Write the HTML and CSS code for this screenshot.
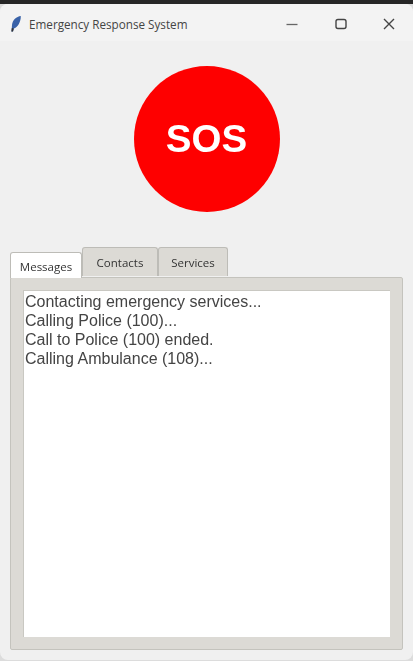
FILE: index.html
```html
<!DOCTYPE html>
<html>
<head>
<title>Emergency Response System</title>
<link rel="stylesheet" href="styles.css">
</head>
<body>

  <div class="top-strip"></div>

  <div class="window">
    <div class="titlebar">
      <svg class="feather" width="12" height="18" viewBox="0 0 12 18">
        <path d="M10.8 1 C6.5 1.5 2.5 5 2 10 L1.8 13 L1.4 16.5 L3 16.5 L3.8 13.5 C7.5 12.5 11 7 10.8 1 Z" fill="#3a62a8"/>
        <path d="M1.8 13 L1.4 16.5 L3 16.5 L3.8 13.5 Z" fill="#333"/>
      </svg>
      <span class="title">Emergency Response System</span>
      <div class="controls">
        <svg width="14" height="14" viewBox="0 0 14 14"><path d="M1.5 7.5 H12.5" stroke="#666" stroke-width="1.3"/></svg>
        <svg width="14" height="14" viewBox="0 0 14 14"><rect x="2" y="2.5" width="10" height="9" rx="2" fill="none" stroke="#444" stroke-width="1.4"/></svg>
        <svg width="14" height="14" viewBox="0 0 14 14"><path d="M2 2 L12 12 M12 2 L2 12" stroke="#444" stroke-width="1.4"/></svg>
      </div>
    </div>

    <div class="content">
      <div class="sos-row">
        <button class="sos">SOS</button>
      </div>

      <div class="tabs">
        <div class="tab active">Messages</div>
        <div class="tab">Contacts</div>
        <div class="tab">Services</div>
      </div>

      <div class="tab-panel">
        <div class="log">
          <p>Contacting emergency services...</p>
          <p>Calling Police (100)...</p>
          <p>Call to Police (100) ended.</p>
          <p>Calling Ambulance (108)...</p>
        </div>
      </div>
    </div>
  </div>

</body>
</html>
```

FILE: styles.css
```css
html, body {
  margin: 0;
  padding: 0;
}

body {
  width: 413px;
  height: 661px;
  overflow: hidden;
  background: #dcdcdc;
  font-family: "Liberation Sans", Arial, sans-serif;
  color: #333;
}

.top-strip {
  height: 4px;
  background: #262626;
}

.window {
  height: 656px;
  display: flex;
  flex-direction: column;
  background: #f0f0f0;
  border-radius: 8px;
  filter: blur(0.4px);
}

.titlebar {
  height: 37px;
  flex: none;
  display: flex;
  align-items: center;
  box-sizing: border-box;
  padding: 3px 0 0 10px;
  background: #f3f3f3;
  border-radius: 8px 8px 0 0;
}

.feather {
  flex: none;
  margin-right: 7px;
}

.title {
  font-family: "Open Sans", sans-serif;
  font-size: 11.7px;
  color: #444;
}

.controls {
  margin-left: auto;
  margin-right: 17px;
  display: flex;
  gap: 34.5px;
}

.content {
  flex: 1;
  display: flex;
  flex-direction: column;
  padding: 25px 10px 10px;
}

.sos-row {
  display: flex;
  justify-content: center;
  margin-bottom: 35px;
}

.sos {
  width: 146px;
  height: 146px;
  border: none;
  border-radius: 50%;
  background: #fe0000;
  color: #fff;
  font-family: "Liberation Sans", Arial, sans-serif;
  font-size: 38.5px;
  font-weight: bold;
  padding: 0;
}

.tabs {
  display: flex;
  align-items: flex-end;
  height: 30px;
  flex: none;
}

.tab {
  width: 76px;
  height: 29px;
  box-sizing: border-box;
  display: flex;
  align-items: center;
  justify-content: center;
  padding-top: 1px;
  background: #dcdad5;
  border: 1px solid #bdbcb7;
  border-bottom: none;
  border-radius: 3px 3px 0 0;
  font-family: "Open Sans", sans-serif;
  font-size: 11.5px;
  color: #333;
  margin-bottom: 1px;
}

.tab:last-child {
  width: 70px;
}

.tab.active {
  width: 72px;
  height: 26px;
  padding: 1px 0 0;
  background: #fff;
  margin-bottom: -1px;
  position: relative;
  z-index: 1;
}

.tab-panel {
  flex: 1;
  display: flex;
  box-sizing: border-box;
  padding: 12px;
  background: #dcdad5;
  border: 1px solid #c4c3bd;
  border-radius: 2px;
}

.log {
  flex: 1;
  background: #fff;
  padding: 1px;
  border-left: 1px solid #c9c8c2;
  border-top: 1px solid #c9c8c2;
  font-size: 16px;
  line-height: 19px;
  color: #444;
}

.log p {
  margin: 0;
}
```
